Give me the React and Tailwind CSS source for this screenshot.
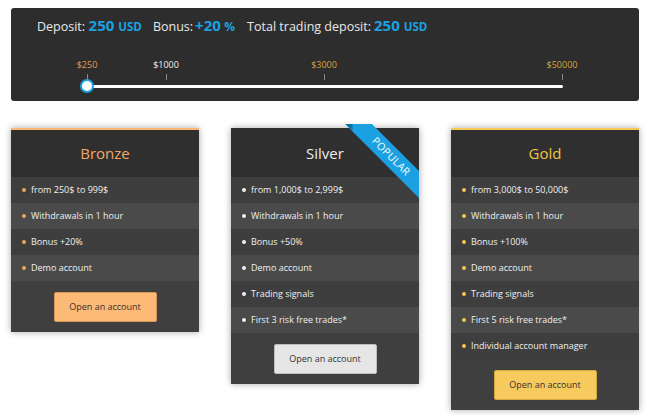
import React from "react";

const plans = [
  {
    name: "Bronze",
    title: "text-[#f3a866]",
    border: "border-t-[#fdb874]",
    dot: "bg-[#f1a45e]",
    btn: "bg-[#fdb976] border-[#d99656]",
    items: ["from 250$ to 999$", "Withdrawals in 1 hour", "Bonus +20%", "Demo account"],
  },
  {
    name: "Silver",
    title: "text-[#ececec]",
    border: "border-t-[#2f2f2f]",
    dot: "bg-[#f0f0f0]",
    btn: "bg-[#e6e6e6] border-[#bdbdbd]",
    ribbon: true,
    items: [
      "from 1,000$ to 2,999$",
      "Withdrawals in 1 hour",
      "Bonus +50%",
      "Demo account",
      "Trading signals",
      "First 3 risk free trades*",
    ],
  },
  {
    name: "Gold",
    title: "text-[#f2c443]",
    border: "border-t-[#f6c955]",
    dot: "bg-[#f4c84e]",
    btn: "bg-[#f6ca5c] border-[#d4a83c]",
    items: [
      "from 3,000$ to 50,000$",
      "Withdrawals in 1 hour",
      "Bonus +100%",
      "Demo account",
      "Trading signals",
      "First 5 risk free trades*",
      "Individual account manager",
    ],
  },
];

const marks = [
  { label: "$250", x: 0, color: "text-[#e99a5c]" },
  { label: "$1000", x: 79, color: "text-[#f0f0f0]" },
  { label: "$3000", x: 237, color: "text-[#d8a43e]" },
  { label: "$50000", x: 475, color: "text-[#d9a63c]" },
];

function Ribbon() {
  return (
    <div className="absolute top-[-6px] right-0 w-[80px] h-[80px] overflow-hidden pointer-events-none">
      <div className="absolute left-[-8px] top-[22.5px] w-[120px] h-[19px] bg-[#1ba1e2] rotate-45 flex items-center justify-center">
        <span className="text-white text-[10.5px] leading-none tracking-[0.3px]">POPULAR</span>
      </div>
      <div className="absolute left-[6.5px] top-0 w-[7px] h-[6.5px] bg-[#0f6f9e] [clip-path:polygon(0_0,100%_0,100%_100%)]" />
    </div>
  );
}

function Card({ p }) {
  return (
    <div className={`relative w-[188px] border-t-2 ${p.border} bg-[#424242] shadow-[0_0_7px_rgba(0,0,0,0.35)]`}>
      {p.ribbon && <Ribbon />}
      <div className="h-[47px] bg-[#2f2f2f] flex items-center justify-center">
        <span className={`text-[15px] ${p.title}`}>{p.name}</span>
      </div>
      {p.items.map((it, i) => (
        <div
          key={it}
          className={`h-[26px] flex items-center pl-[11px] ${i % 2 === 0 ? "bg-[#3e3e3e]" : "bg-[#4a4a4a]"}`}
        >
          <span className={`w-[4px] h-[4px] rounded-full ${p.dot}`} />
          <span className="ml-[5px] text-[9px] text-[#f0f0f0]">{it}</span>
        </div>
      ))}
      <div className="pt-[11px] pb-[10px] flex justify-center bg-[#3f3f3f]">
        <button className={`w-[103px] h-[30px] rounded-[2px] border ${p.btn} text-[9px] text-[#333]`}>
          Open an account
        </button>
      </div>
    </div>
  );
}

export default function App() {
  return (
    <div className="w-[650px] h-[415px] bg-white pt-[8px] px-[11px] font-['Open_Sans',sans-serif] overflow-hidden">
      <div className="h-[93px] rounded-[3px] bg-[#2d2d2d] pt-[7px] pl-[26px]">
        <div className="flex items-baseline leading-[20px] text-[12.5px] text-[#e8e8e8]">
          <span>Deposit:</span>
          <span className="ml-[3.5px] text-[15px] font-bold text-[#1ba1e2]">250</span>
          <span className="ml-[4px] text-[11.5px] font-bold text-[#1ba1e2]">USD</span>
          <span className="ml-[11px]">Bonus:</span>
          <span className="ml-[2px] text-[15px] font-bold text-[#1ba1e2]">+20</span>
          <span className="ml-[3.5px] text-[12px] font-bold text-[#1ba1e2]">%</span>
          <span className="ml-[12px]">Total trading deposit:</span>
          <span className="ml-[3px] text-[15px] font-bold text-[#1ba1e2]">250</span>
          <span className="ml-[4px] text-[11.5px] font-bold text-[#1ba1e2]">USD</span>
        </div>
        <div className="relative ml-[50px] mt-[20px] w-[476px] h-[38px]">
          {marks.map((m) => (
            <React.Fragment key={m.label}>
              <span
                className={`absolute top-[2px] -translate-x-1/2 text-[9px] leading-[12px] ${m.color}`}
                style={{ left: m.x }}
              >
                {m.label}
              </span>
              <span className="absolute top-[17px] w-px h-[6px] bg-[#8a8a8a]" style={{ left: m.x }} />
            </React.Fragment>
          ))}
          <div className="absolute top-[27.5px] left-0 w-[476px] h-[3px] bg-white rounded-full" />
          <div className="absolute top-[22px] left-[-7px] w-[14px] h-[14px] rounded-full bg-white border-[2.5px] border-[#1ba1e2]" />
        </div>
      </div>
      <div className="mt-[27px] flex items-start gap-[32px]">
        {plans.map((p) => (
          <Card key={p.name} p={p} />
        ))}
      </div>
    </div>
  );
}
